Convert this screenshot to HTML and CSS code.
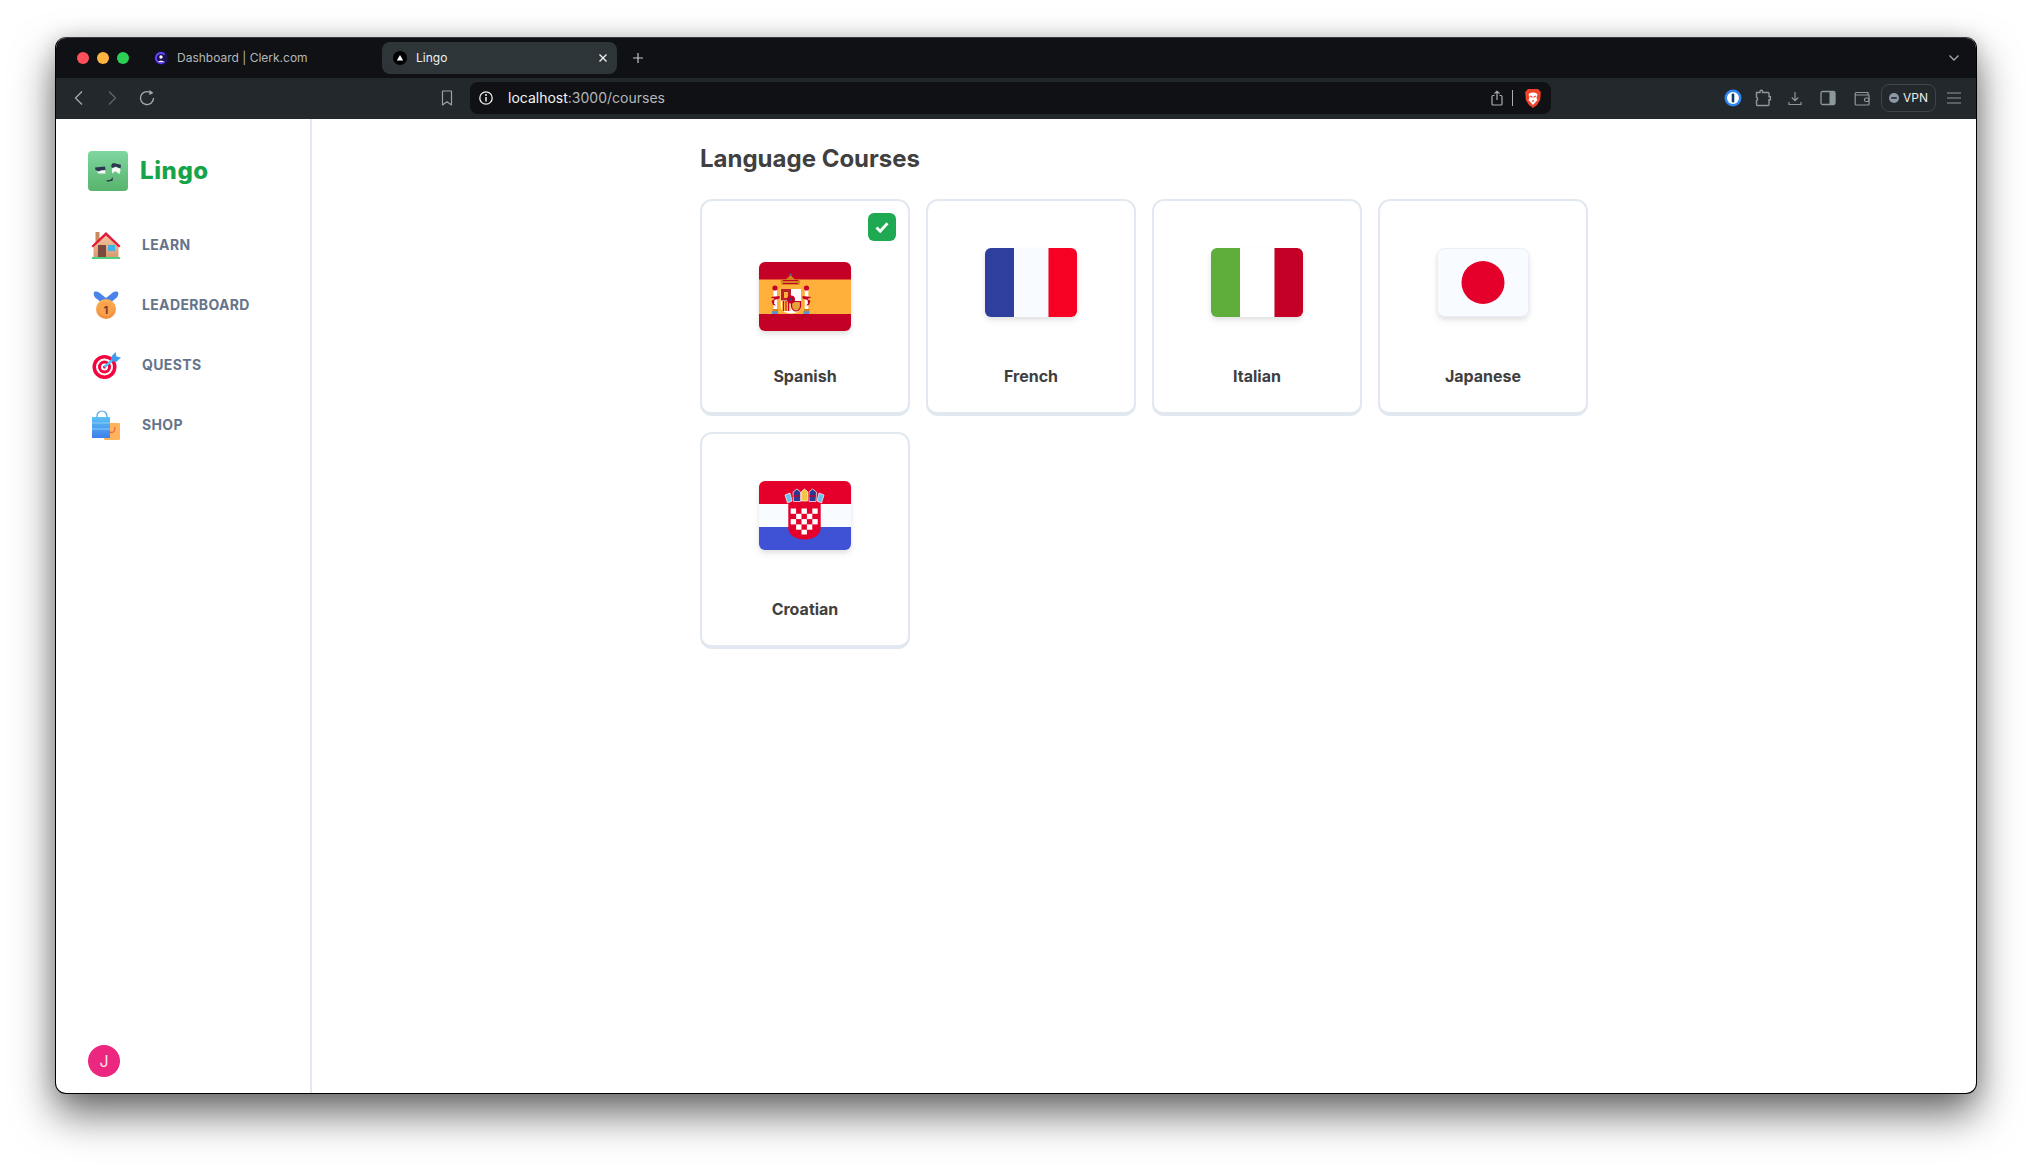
FILE: index.html
```html
<!DOCTYPE html>
<html lang="en">
<head>
<meta charset="utf-8">
<title>Lingo</title>
<link rel="stylesheet" href="styles.css">
</head>
<body>
<svg class="defs" width="0" height="0" aria-hidden="true">
  <defs>
    <linearGradient id="gLogo" x1="0" y1="0" x2="0" y2="1"><stop offset="0" stop-color="#7fd69f"/><stop offset="1" stop-color="#57b46c"/></linearGradient>
    <linearGradient id="gWall" x1="0" y1="0" x2="0" y2="1"><stop offset="0" stop-color="#f6c6a0"/><stop offset="1" stop-color="#d99a72"/></linearGradient>
    <linearGradient id="gMedal" x1="0" y1="0" x2="0" y2="1"><stop offset="0" stop-color="#ffb257"/><stop offset="1" stop-color="#f08c3a"/></linearGradient>
    <linearGradient id="gBag" x1="0" y1="0" x2="0" y2="1"><stop offset="0" stop-color="#5cc2f5"/><stop offset="1" stop-color="#3f7fea"/></linearGradient>
  </defs>
</svg>
<div class="window">
  <div class="tabbar">
    <div class="lights"><span class="light red"></span><span class="light amber"></span><span class="light green"></span></div>
    <div class="tab tab-idle">
      <svg class="favicon" viewBox="0 0 14 14"><circle cx="7" cy="7" r="7" fill="#1b1250"/><path d="M10.6 3.6A5 5 0 1 0 10.6 10.4" fill="none" stroke="#6c47ff" stroke-width="1.8"/><circle cx="7" cy="6" r="1.7" fill="#fff"/><path d="M4.2 11c.6-1.8 5-1.8 5.6 0z" fill="#fff"/></svg>
      <span class="tab-title">Dashboard | Clerk.com</span>
    </div>
    <div class="tab tab-active">
      <svg class="favicon" viewBox="0 0 14 14"><circle cx="7" cy="7" r="7" fill="#000"/><path d="M7 4l3.2 5.4H3.8z" fill="#fff"/></svg>
      <span class="tab-title">Lingo</span>
      <svg class="tab-close" viewBox="0 0 10 10"><path d="M1.5 1.5l7 7M8.5 1.5l-7 7" stroke="#f0f0f0" stroke-width="1.4" fill="none"/></svg>
    </div>
    <svg class="new-tab" viewBox="0 0 12 12"><path d="M6 1v10M1 6h10" stroke="#c4c8ca" stroke-width="1.2" fill="none"/></svg>
    <svg class="tabs-menu" viewBox="0 0 12 12"><path d="M1.5 3.5L6 8l4.5-4.5" stroke="#a5abae" stroke-width="1.3" fill="none"/></svg>
  </div>

  <div class="toolbar">
    <div class="nav-btns">
      <svg class="tool" viewBox="0 0 16 16"><path d="M11 1.500L4.500 8l6.500 6.500" stroke="#a3acb0" stroke-width="1.300" fill="none"/></svg>
      <svg class="tool" viewBox="0 0 16 16"><path d="M5 1.500L11.500 8 5 14.500" stroke="#5d666a" stroke-width="1.300" fill="none"/></svg>
      <svg class="tool reload" viewBox="0 0 16 16"><path d="M14.500 8A6.500 6.500 0 1 1 10.800 2.200" stroke="#a3acb0" stroke-width="1.300" fill="none"/><path d="M10.500 0l4 3-4.200 2z" fill="#a3acb0"/></svg>
    </div>
    <svg class="tool bookmark" viewBox="0 0 16 16"><path d="M3.500 1h9v14L8 11.800 3.500 15z" stroke="#98a1a5" stroke-width="1.200" fill="none" stroke-linejoin="round"/></svg>
    <div class="address">
      <svg class="tool" viewBox="0 0 16 16"><circle cx="8" cy="8" r="6.200" stroke="#f2f2f2" stroke-width="1.300" fill="none"/><path d="M8 7v4.500" stroke="#f2f2f2" stroke-width="1.500"/><circle cx="8" cy="4.900" r="1" fill="#f2f2f2"/></svg>
      <span class="url"><span class="url-host">localhost</span>:3000/courses</span>
      <svg class="tool" viewBox="0 0 16 16"><path d="M5.500 5.500H4a1 1 0 0 0-1 1v7.500a1 1 0 0 0 1 1h8a1 1 0 0 0 1-1V6.500a1 1 0 0 0-1-1h-1.500M8 10V1.200M5.400 3.600L8 1.200l2.600 2.400" stroke="#a8b0b3" stroke-width="1.200" fill="none"/></svg>
      <span class="addr-sep"></span>
      <svg class="brave" viewBox="0 0 18 20"><path d="M4 1h10l2.800 3-.6 8-3.200 5L9 20l-4-3-3.200-5-.6-8z" fill="#f1432a"/><path d="M4.500 6l3-1.500h3L13.500 6 12.500 10l1 2-4.500 5-4.500-5 1-2z" fill="#fff"/><path d="M6 8l2.500 1.200M12 8L9.500 9.200M9 12v2" stroke="#f1432a" stroke-width="1.200"/></svg>
    </div>
    <div class="tools-right">
      <svg class="tool-r" viewBox="0 0 18 18"><circle cx="9" cy="9" r="8.500" fill="#2e86f0"/><circle cx="9" cy="9" r="6" fill="#fff"/><rect x="7.700" y="4.500" width="2.600" height="9" rx="1" fill="#123a6e"/></svg>
      <svg class="tool-r" viewBox="0 0 18 18"><path d="M2.500 3.500h3.500V2.500a1.300 1.300 0 0 1 2.600 0v1h5.400a1 1 0 0 1 1 1v3.200h1.400v3h-1.400v4.800a1 1 0 0 1-1 1H3.500a1 1 0 0 1-1-1v-4c1.500-.5 1.500-2.700 0-3.200z" stroke="#8d989c" stroke-width="1.400" fill="none"/></svg>
      <svg class="tool-r" viewBox="0 0 18 18"><path d="M9 3v8.500M5.800 8.500L9 11.700l3.200-3.200M3 13v2.500h12V13" stroke="#8d989c" stroke-width="1.200" fill="none"/></svg>
      <svg class="tool-r" viewBox="0 0 18 18"><rect x="2" y="2.500" width="14" height="13" rx="1.500" stroke="#8d989c" stroke-width="1.300" fill="none"/><rect x="10.500" y="2.500" width="5.500" height="13" fill="#8d989c"/></svg>
      <svg class="tool-r" viewBox="0 0 18 18"><path d="M15 6V3.500H3.500a1.300 1.300 0 0 0-1.300 1.300V15a1 1 0 0 0 1 1H15a1 1 0 0 0 1-1V6H2.500" stroke="#8d989c" stroke-width="1.200" fill="none"/><rect x="11.500" y="9" width="4.500" height="3.500" rx="1.500" stroke="#8d989c" stroke-width="1.200" fill="none"/></svg>
      <div class="vpn"><svg class="vpn-dot" viewBox="0 0 10 10"><circle cx="5" cy="5" r="5" fill="#8d98a8"/><rect x="2.200" y="4.200" width="5.600" height="1.600" fill="#23282c"/></svg><span class="vpn-text">VPN</span></div>
      <svg class="tool-r" viewBox="0 0 18 18"><path d="M2 4h14M2 9h14M2 14h14" stroke="#8d989c" stroke-width="1.200" fill="none"/></svg>
    </div>
  </div>

  <div class="app">
    <aside class="sidebar">
      <div class="brand">
        <svg class="logo" viewBox="0 0 40 40">
          <rect width="40" height="40" rx="4" fill="url(#gLogo)"/>
          <path d="M9 19h8l.5 3.500H10z" fill="#f4faf6"/>
          <path d="M24 17.500l4-1.500 4.500 1.500-.5 5h-2c-.5-2-3.500-3-4.500-1l-1.500 1z" fill="#f4faf6"/>
          <path d="M7 16.500l10-1 .5 3.500-5 .5-1.500 1-3.500-1.500z" fill="#2f3550"/>
          <path d="M23 14.500l2-2.500 8 1.800-.5 3.700-5-2-3.500 1.500z" fill="#2f3550"/>
          <path d="M18 29.500l4.500-.8 2.500-2.700-.5 3.800-5 1z" fill="#2f3550"/>
        </svg>
        <span class="brand-name">Lingo</span>
      </div>
      <nav class="menu">
        <a class="menu-item">
          <svg class="menu-icon" viewBox="0 0 32 32">
            <rect x="5.500" y="3" width="4" height="11" fill="#c98a5e"/>
            <path d="M3.500 28V15L16 5l12.500 10v13z" fill="url(#gWall)"/>
            <path d="M1.500 17L16 3l14.500 14-1.500 1.500L16 6.500 3 18.500z" fill="#e3193d"/>
            <rect x="8" y="16" width="8" height="12" fill="#7b4a3f"/>
            <rect x="18" y="16" width="7" height="6" fill="#3eb4ec"/>
            <rect x="2" y="28" width="28" height="2" fill="#4fd07e"/>
          </svg>
          <span class="menu-label">Learn</span>
        </a>
        <a class="menu-item">
          <svg class="menu-icon" viewBox="0 0 32 32">
            <path d="M4 3c3-1 5 0 7 2l5 4 5-4c2-2 4-3 7-2 1 3-1 6-3 7l-6 5h-6l-6-5C5 9 3 6 4 3z" fill="#4b83ea"/>
            <circle cx="16" cy="20" r="10" fill="url(#gMedal)"/>
            <circle cx="16" cy="20" r="7" fill="#f8a24c"/>
            <text class="medal-num" x="16" y="24.500" text-anchor="middle">1</text>
          </svg>
          <span class="menu-label">Leaderboard</span>
        </a>
        <a class="menu-item">
          <svg class="menu-icon" viewBox="0 0 32 32">
            <circle cx="14.500" cy="18" r="12" fill="#f4033f"/>
            <circle cx="14.500" cy="18" r="8.500" fill="#fff"/>
            <circle cx="14.500" cy="18" r="6.500" fill="#f4033f"/>
            <circle cx="14.500" cy="18" r="3.500" fill="#fff"/>
            <circle cx="14.500" cy="18" r="1.500" fill="#f4033f"/>
            <path d="M14.500 18l9-8" stroke="#4fc3ee" stroke-width="2.500"/>
            <path d="M21 8l4.500-5 1 4.500 4.500 1-5 4.500-4-1z" fill="#3f9bf0"/>
          </svg>
          <span class="menu-label">Quests</span>
        </a>
        <a class="menu-item">
          <svg class="menu-icon" viewBox="0 0 32 32">
            <rect x="14" y="14" width="16" height="17" rx="1" fill="#ffb35c"/>
            <path d="M19 20c0 5 6 5 6-2" stroke="#f0604a" stroke-width="1.200" fill="none"/>
            <path d="M7 9V7a5 5 0 0 1 10 0v2" stroke="#4aa6ec" stroke-width="1.200" fill="none"/>
            <rect x="2" y="8" width="18" height="21" fill="url(#gBag)"/>
            <path d="M2 14h18M2 20h18" stroke="#8fd0f7" stroke-width="1.300" opacity=".6"/>
          </svg>
          <span class="menu-label">Shop</span>
        </a>
      </nav>
      <div class="user"><span class="avatar">J</span></div>
    </aside>

    <main class="main">
      <div class="content">
        <h1 class="title">Language Courses</h1>
        <div class="courses">
          <div class="card">
            <div class="card-top"><span class="check"><svg class="check-icon" viewBox="0 0 16 16"><path d="M2.500 8.500l3.700 3.700 7.300-8" stroke="#fff" stroke-width="2.800" fill="none"/></svg></span></div>
            <svg class="flag" viewBox="0 0 92 69" preserveAspectRatio="none">
              <rect width="92" height="69" fill="#c40026"/>
              <rect y="17.500" width="92" height="34.500" fill="#ffb03b"/>
              <path d="M22.500 23l-1-6 4 2 6-6 6 6 4-2-1 6z" fill="#d4821f"/>
              <path d="M24 18.500h15M24 21.500h15" stroke="#c40026" stroke-width="1.200"/>
              <circle cx="31.700" cy="12.500" r="1.100" fill="#4472b8"/>
              <path d="M21.700 27h20.300v17c0 5-5 7.500-10 7.500s-10.300-2.500-10.300-7.500z" fill="#fff"/>
              <rect x="22" y="27" width="10" height="11.500" fill="#b8202a"/>
              <rect x="25" y="30" width="4" height="6" fill="#ffb03b"/>
              <path d="M23 39h8.500v10h-8.500z" fill="#ffb03b"/>
              <path d="M24.500 39v10M27 39v10M29.500 39v10" stroke="#c40026" stroke-width="1"/>
              <path d="M32.500 39.500h9v4.500c0 3-2.500 5-4.500 5s-4.500-2-4.500-5z" fill="#e8a23a" stroke="#c40026" stroke-width="1.200"/>
              <circle cx="32" cy="37.500" r="4" fill="#c40026"/><circle cx="32" cy="37.500" r="1.300" fill="#2b4a9e"/>
              <rect x="14.500" y="27" width="3.500" height="21" fill="#fff"/><rect x="45.800" y="27" width="3.500" height="21" fill="#fff"/>
              <circle cx="16" cy="26" r="2.600" fill="#c40026"/><circle cx="47.500" cy="26" r="2.600" fill="#c40026"/>
              <path d="M11.500 35l9 -1v2.500l-5 1.500-.5 3.500 2 2-3-.5-1.500-4 3-2zM52.500 35l-9-1v2.500l5 1.500.5 3.500-2 2 3-.5 1.500-4-3-2z" fill="#c40026"/>
              <rect x="13.500" y="47" width="5.500" height="2.500" fill="#d4821f"/><rect x="45" y="47" width="5.500" height="2.500" fill="#d4821f"/>
              <rect x="13" y="49.200" width="6" height="2.800" fill="#5a8fd0"/><rect x="44.500" y="49.200" width="6" height="2.800" fill="#5a8fd0"/>
            </svg>
            <p class="card-label">Spanish</p>
          </div>
          <div class="card">
            <div class="card-top"></div>
            <svg class="flag" viewBox="0 0 92 69" preserveAspectRatio="none"><rect width="29" height="69" fill="#2e3f9e"/><rect x="29" width="34.500" height="69" fill="#f8fbff"/><rect x="63.500" width="28.500" height="69" fill="#f60024"/></svg>
            <p class="card-label">French</p>
          </div>
          <div class="card">
            <div class="card-top"></div>
            <svg class="flag" viewBox="0 0 92 69" preserveAspectRatio="none"><rect width="29" height="69" fill="#5fad3b"/><rect x="29" width="34.500" height="69" fill="#fff"/><rect x="63.500" width="28.500" height="69" fill="#c40026"/></svg>
            <p class="card-label">Italian</p>
          </div>
          <div class="card">
            <div class="card-top"></div>
            <svg class="flag" viewBox="0 0 92 69" preserveAspectRatio="none"><rect x=".5" y=".5" width="91" height="68" rx="7" fill="#f8fbff" stroke="#e8eef5"/><circle cx="46" cy="34.500" r="21.500" fill="#e4002b"/></svg>
            <p class="card-label">Japanese</p>
          </div>
          <div class="card">
            <div class="card-top"></div>
            <svg class="flag" viewBox="0 0 92 69" preserveAspectRatio="none">
              <rect width="92" height="23" fill="#e4002b"/><rect y="23" width="92" height="23" fill="#f8fbff"/><rect y="46" width="92" height="23" fill="#3f52d5"/>
              <path d="M29.300 23h32.400v24c0 7-7.500 11.500-16.200 11.500S29.300 54 29.300 47z" fill="#e4002b"/>
              <g fill="#fff">
                <rect x="31.700" y="27.500" width="5.400" height="5.300"/><rect x="42.500" y="27.500" width="5.400" height="5.300"/><rect x="53.300" y="27.500" width="5.400" height="5.300"/>
                <rect x="37.100" y="32.800" width="5.400" height="5.300"/><rect x="47.900" y="32.800" width="5.400" height="5.300"/>
                <rect x="31.700" y="38.100" width="5.400" height="5.300"/><rect x="42.500" y="38.100" width="5.400" height="5.300"/><rect x="53.300" y="38.100" width="5.400" height="5.300"/>
                <rect x="37.100" y="43.400" width="5.400" height="5.300"/><rect x="47.900" y="43.400" width="5.400" height="5.300"/>
                <rect x="42.500" y="48.700" width="5.400" height="4.800"/>
              </g>
              <path d="M26 14l5-2 2 8-4.500 2z" fill="#64c5ee" stroke="#fff" stroke-width=".7"/>
              <path d="M34 11l4-3 3.500 3v9.500h-7z" fill="#2b3a90" stroke="#fff" stroke-width=".7"/>
              <path d="M42.500 10.500l3-2.500 3 2.500v9.500h-6z" fill="#f4c542" stroke="#fff" stroke-width=".7"/>
              <path d="M50 11l3.500-3 4 3-.5 9.500h-7z" fill="#2b3a90" stroke="#fff" stroke-width=".7"/>
              <path d="M60 12l5 2-2.500 8-4.500-2z" fill="#64c5ee" stroke="#fff" stroke-width=".7"/>
              <path d="M34.500 15h6.500M50.500 15h6.500" stroke="#c40026" stroke-width="1.600"/>
            </svg>
            <p class="card-label">Croatian</p>
          </div>
        </div>
      </div>
    </main>
  </div>
</div>
</body>
</html>
```

FILE: styles.css
```css
* { box-sizing: border-box; }
html, body { margin: 0; height: 100%; }
body {
  background: #fff;
  font-family: Inter, "Noto Sans", sans-serif;
  padding: 37px 55px 73px;
  overflow: hidden;
}
.defs { position: absolute; }

.window {
  height: 1057px;
  width: 1922px;
  border: 1px solid #000;
  border-top-color: #3a3d40;
  border-radius: 11px;
  overflow: hidden;
  background: #fff;
  box-shadow: 0 20px 42px rgba(0, 0, 0, .58), 0 0 20px rgba(0, 0, 0, .14);
  display: flex;
  flex-direction: column;
}

/* browser chrome */
.tabbar {
  height: 40px;
  flex: none;
  background: #0f1114;
  display: flex;
  align-items: flex-start;
  padding: 4px 16px 0 21px;
}
.lights { display: flex; gap: 8px; height: 32px; align-items: center; }
.light { width: 12px; height: 12px; border-radius: 50%; }
.red { background: #ff4f5b; }
.amber { background: #ffb340; }
.green { background: #2ecf55; }
.tab {
  height: 32px;
  border-radius: 8px;
  display: flex;
  align-items: center;
  font-size: 12px;
  color: #b4b7ba;
}
.tab-idle { width: 237px; margin-left: 16px; padding-left: 9px; }
.tab-active { width: 235px; padding: 0 9px 0 11px; background: #2e3539; color: #f0f0f0; }
.favicon { width: 14px; height: 14px; flex: none; }
.tab-title { margin: -1px 0 0 9px; flex: 1; }
.tab-close { width: 10px; height: 10px; }
.new-tab { width: 12px; height: 12px; margin: 10px 0 0 15px; }
.tabs-menu { width: 12px; height: 12px; margin: 10px 0 0 auto; }

.toolbar {
  height: 41px;
  flex: none;
  background: #23282c;
  display: flex;
  align-items: center;
  padding: 0 0 1px 15px;
}
.nav-btns { display: flex; gap: 17px; }
.tool { width: 16px; height: 16px; flex: none; display: block; }
.reload { margin-left: 2px; }
.bookmark { margin-left: 284px; }
.address {
  margin-left: 15px;
  width: 1081px;
  height: 32px;
  background: #0f1114;
  border-radius: 8px;
  display: flex;
  align-items: center;
  padding: 0 9px 0 8px;
}
.url {
  flex: 1;
  margin: -1px 0 0 14px;
  font-size: 14px;
  color: #b4b7ba;
}
.url-host { color: #f4f4f4; }
.addr-sep { width: 1px; height: 16px; background: #a8b0b3; margin: 0 11px 0 7px; }
.brave { width: 18px; height: 20px; display: block; }
.tools-right {
  margin-left: auto;
  padding-right: 13px;
  display: flex;
  align-items: center;
}
.tool-r { width: 18px; height: 18px; display: block; flex: none; }
.tool-r:nth-child(2) { margin-left: 12px; }
.tool-r:nth-child(3) { margin-left: 14px; }
.tool-r:nth-child(4) { margin-left: 15px; }
.tool-r:nth-child(5) { margin-left: 16px; }
.tool-r:nth-child(7) { margin-left: 9px; }
.vpn {
  margin-left: 10px;
  width: 55px;
  height: 28px;
  border: 1px solid #3c4549;
  border-radius: 8px;
  display: flex;
  align-items: center;
  justify-content: center;
  gap: 4px;
  font-size: 12px;
  color: #e8eaeb;
}
.vpn-dot { width: 10px; height: 10px; display: block; }
.vpn-text { margin-top: -1px; }

/* app */
.app { flex: 1; min-height: 0; display: flex; }
.sidebar {
  width: 256px;
  flex: none;
  border-right: 2px solid #e2e8f0;
  display: flex;
  flex-direction: column;
  padding: 32px 16px 16px 32px;
}
.brand { display: flex; align-items: center; gap: 12px; padding-bottom: 28px; }
.logo { width: 40px; height: 40px; display: block; flex: none; }
.brand-name {
  margin-top: -2px;
  font-size: 24px;
  font-weight: 800;
  letter-spacing: .6px;
  color: #16a34a;
}
.menu { display: flex; flex-direction: column; gap: 8px; flex: 1; }
.menu-item {
  height: 52px;
  display: flex;
  align-items: center;
  gap: 20px;
  padding-left: 2px;
  font-size: 14px;
  font-weight: 700;
  letter-spacing: .35px;
  text-transform: uppercase;
  color: #64748b;
}
.menu-label { margin-top: -1px; }
.menu-icon { width: 32px; height: 32px; display: block; flex: none; }
.medal-num { font-family: Inter, sans-serif; font-size: 11px; font-weight: 700; fill: #7a3b2c; }
.user { display: flex; }
.avatar {
  width: 32px;
  height: 32px;
  border-radius: 50%;
  background: #ec277f;
  color: #fde0ec;
  font-size: 16px;
  display: flex;
  align-items: center;
  justify-content: center;
}

.main { flex: 1; min-width: 0; }
.content { max-width: 912px; margin: 0 auto; padding: 24px 12px 0; }
.title {
  margin: 0 0 24px;
  font-size: 24px;
  line-height: 32px;
  font-weight: 700;
  color: #404040;
}
.courses {
  display: grid;
  grid-template-columns: repeat(auto-fill, minmax(210px, 1fr));
  gap: 16px;
}
.card {
  min-height: 217px;
  border: 2px solid #e2e8f0;
  border-bottom-width: 4px;
  border-radius: 12px;
  padding: 12px 12px 24px;
  display: flex;
  flex-direction: column;
  align-items: center;
  justify-content: space-between;
}
.card-top { width: 100%; display: flex; justify-content: flex-end; }
.check {
  width: 28px;
  height: 28px;
  border-radius: 6px;
  background: #1fa952;
  display: flex;
  align-items: center;
  justify-content: center;
}
.check-icon { width: 16px; height: 16px; display: block; }
.flag {
  width: 92px;
  height: 69px;
  margin: .5px;
  display: block;
  flex: none;
  border-radius: 6px;
  filter: drop-shadow(0 4px 3px rgba(0, 0, 0, .07)) drop-shadow(0 2px 2px rgba(0, 0, 0, .06));
}
.card-label {
  margin: 12px 0 0;
  font-size: 16px;
  line-height: 24px;
  font-weight: 700;
  color: #404040;
  text-align: center;
}
```
